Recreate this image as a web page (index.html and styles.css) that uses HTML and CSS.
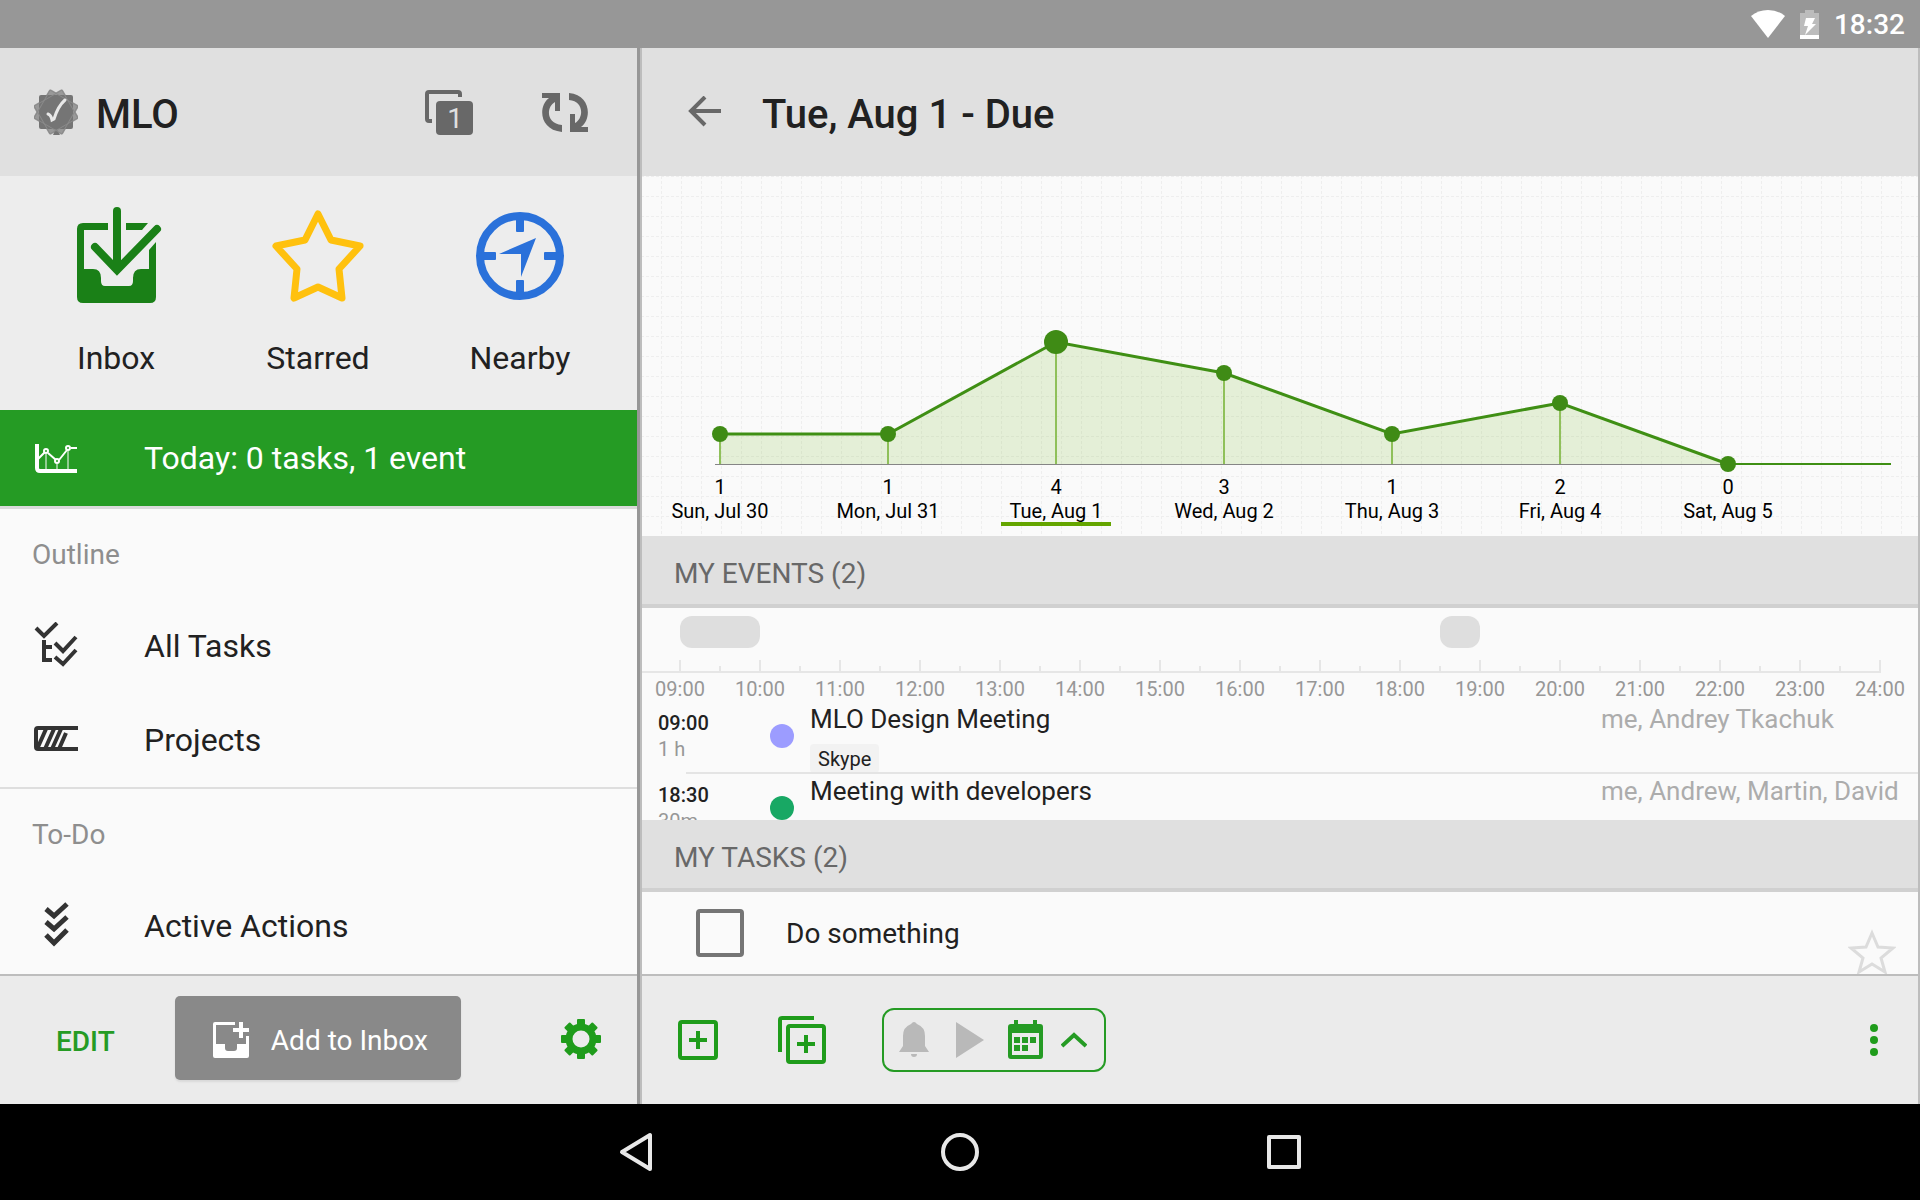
FILE: index.html
```
<!DOCTYPE html>
<html lang="en">

<head>
    <meta charset="UTF-8">
    <meta name="viewport" content="width=device-width, initial-scale=1.0">
    <title>MLO</title>
    <link rel="stylesheet" href="styles.css">
</head>

<body>
<div class="screen">

  <!-- android status bar -->
  <div class="status-bar">
    <svg class="wifi" width="34" height="28" viewBox="0 0 34 28"><path d="M17 28L0 6Q7 0 17 0T34 6z" fill="#fff"/></svg>
    <svg class="battery" width="19" height="29" viewBox="0 0 19 29">
      <path d="M5 0h9v3h5v26H0V3h5z" fill="#bcbcbc"/>
      <path d="M0 25h19v4H0z" fill="#fff"/>
      <path d="M6 8h9l-3 6h4L5 25l3-9H4z" fill="#fff"/>
    </svg>
    <span class="clock">18:32</span>
  </div>

  <div class="panes">

    <!-- left side -->
    <aside class="sidebar">
      <header class="side-header">
        <svg class="logo" width="44" height="56" viewBox="0 0 44 56">
          <g fill="#999">
            <rect x="5" y="10" width="34" height="34" rx="2" transform="rotate(30 22 27)"/>
            <rect x="5" y="10" width="34" height="34" rx="2" transform="rotate(60 22 27)"/>
          </g>
          <path d="M22 43l4 7h-7z" fill="#757575"/>
          <rect x="5" y="10" width="34" height="34" rx="2" fill="#757575"/>
          <g fill="none" stroke="#8a8a8a">
            <rect x="6" y="11" width="32" height="32" transform="rotate(30 22 27)"/>
            <rect x="6" y="11" width="32" height="32" transform="rotate(60 22 27)"/>
          </g>
          <path d="M14 29q3 1 4 6l2-1Q24 21 31 15" fill="none" stroke="#e8e8e8" stroke-width="3" stroke-linecap="round"/>
        </svg>
        <h1>MLO</h1>
        <button type="button" class="icon-button views" aria-label="Views">
          <svg width="48" height="46" viewBox="0 0 48 46">
            <path d="M7 31H4q-2 0-2-2V4q0-2 2-2h29q2 0 2 2v3" fill="none" stroke="#686868" stroke-width="4"/>
            <rect x="11" y="11" width="37" height="34" rx="4" fill="#686868"/>
            <text x="30" y="38" class="views-count">1</text>
          </svg>
        </button>
        <button type="button" class="icon-button" aria-label="Sync">
          <svg width="46" height="40" viewBox="0 0 46 40" fill="#686868">
            <path d="M0 0h18v18h-5V9C4 14 4 31 20 32v7C-3 37-4 13 7 5H0z"/>
            <path d="M46 39H28V21h5v9c9-5 9-22-6-23V0c22 2 23 26 12 34h7z"/>
          </svg>
        </button>
      </header>

      <nav class="shortcuts">
        <a href="#inbox">
          <svg width="92" height="104" viewBox="0 -1 92 104">
            <path fill="#1a8017" d="M13 22h25v7H14v39h9q8 0 8 9v3q0 5 4 5h24q4 0 4-5v-3q0-9 8-9h8V49l7-8v55q0 6-6 6H13q-6 0-6-6V28q0-6 6-6z"/>
            <path fill="#1a8017" d="M56 22h22l-6 7H56z"/>
            <path d="M47 10v54M25 46l22 23 40-41" fill="none" stroke="#1a8017" stroke-width="8" stroke-linecap="round"/>
          </svg>
          <span>Inbox</span>
        </a>
        <a href="#starred">
          <svg width="94" height="104" viewBox="0 1 94 104">
            <path d="M47 15l13 26 29 6-21 23 3 29-24-11-24 11 3-29L5 47l29-6z" fill="none" stroke="#ffc10e" stroke-width="7" stroke-linejoin="round"/>
          </svg>
          <span>Starred</span>
        </a>
        <a href="#nearby">
          <svg width="90" height="104" viewBox="0 1 90 104">
            <circle cx="45" cy="57" r="40" fill="none" stroke="#2a71da" stroke-width="8"/>
            <g fill="#2a71da">
              <rect x="41" y="18" width="8" height="15" rx="1"/>
              <rect x="41" y="81" width="8" height="15" rx="1"/>
              <rect x="6" y="53" width="15" height="8" rx="1"/>
              <rect x="69" y="53" width="15" height="8" rx="1"/>
              <path d="M61 39L46 78V55H24z"/>
            </g>
          </svg>
          <span>Nearby</span>
        </a>
      </nav>

      <a href="#today" class="row today">
        <svg width="44" height="48" viewBox="0 0 44 48" fill="none" stroke="#fff">
          <path d="M3 10v24q0 3 3 3h37" stroke-width="4"/>
          <path d="M3 26l8-8M14 19l8 7M25 26l8-10M37 14h6" stroke-width="2"/>
          <path d="M12 20v16M23 30v6M34 17v19" stroke-width="1"/>
          <circle cx="12" cy="17" r="2" stroke-width="2"/>
          <circle cx="23" cy="27" r="2" stroke-width="2"/>
          <circle cx="34" cy="14" r="2" stroke-width="2"/>
        </svg>
        <span>Today: 0 tasks, 1 event</span>
      </a>

      <div class="side-list">
        <section>
          <h2>Outline</h2>
          <a href="#all" class="row">
            <svg width="44" height="48" viewBox="0 2 44 48" fill="none" stroke="#333" stroke-width="4">
              <path d="M2 8l8 8L23 3M21 23l8 8 13-14M21 37l8 7 13-14"/>
              <path d="M18 27h-9M10 20v20h8"/>
            </svg>
            <span>All Tasks</span>
          </a>
          <a href="#projects" class="row">
            <svg width="44" height="48" viewBox="0 0 44 48">
              <path d="M44 12H4q-2 0-2 2v17q0 2 2 2h40" fill="none" stroke="#333" stroke-width="4"/>
              <path d="M4 31l8-18M11 33l9-20M18 33l9-20M25 33l7-16" stroke="#333" stroke-width="4"/>
            </svg>
            <span>Projects</span>
          </a>
        </section>
        <section>
          <h2>To-Do</h2>
          <a href="#active" class="row">
            <svg width="44" height="48" viewBox="0 2 44 48" fill="none" stroke="#333" stroke-width="5">
              <path d="M12 9l8 7L33 4M12 22l8 7 13-12M12 35l8 8 13-13"/>
            </svg>
            <span>Active Actions</span>
          </a>
        </section>
      </div>

      <footer class="side-footer">
        <button type="button" class="edit">EDIT</button>
        <button type="button" class="add-inbox">
          <svg width="36" height="36" viewBox="0 0 36 36" fill="#fff">
            <path d="M2 0h20v3H3v19h9v4q0 3 3 3h6q3 0 3-3v-4h9v-8h3v20q0 2-2 2H2q-2 0-2-2V2q0-2 2-2z"/>
            <path d="M26 0h4v6h6v4h-6v6h-4v-6h-6V6h6z"/>
          </svg>
          Add to Inbox
        </button>
        <button type="button" class="icon-button" aria-label="Settings">
          <svg width="40" height="42" viewBox="-20 -20 40 42" fill="#1f9c1b">
            <circle r="12" fill="none" stroke="#1f9c1b" stroke-width="7"/>
            <rect x="-4" y="-20" width="8" height="8" rx="1"/>
            <rect x="-4" y="12" width="8" height="8" rx="1"/>
            <rect x="-20" y="-4" width="8" height="8" rx="1"/>
            <rect x="12" y="-4" width="8" height="8" rx="1"/>
            <g transform="rotate(45)">
              <rect x="-4" y="-20" width="8" height="8" rx="1"/>
              <rect x="-4" y="12" width="8" height="8" rx="1"/>
              <rect x="-20" y="-4" width="8" height="8" rx="1"/>
              <rect x="12" y="-4" width="8" height="8" rx="1"/>
            </g>
          </svg>
        </button>
      </footer>
    </aside>

    <!-- right side -->
    <main class="content">
      <header class="content-header">
        <button type="button" class="icon-button" aria-label="Back">
          <svg width="34" height="34" viewBox="0 0 34 34" fill="none" stroke="#686868" stroke-width="4"><path d="M34 15H4M18 1L4 15l14 14"/></svg>
        </button>
        <h1>Tue, Aug 1 - Due</h1>
      </header>

      <!-- tasks per day -->
      <svg class="chart" viewBox="0 0 1276 360">
        <defs>
          <pattern id="grid" x="19" width="20" height="20" patternUnits="userSpaceOnUse">
            <path d="M0 .5h20M.5 0v20" fill="none" stroke="#eee" stroke-dasharray="3 2"/>
          </pattern>
        </defs>
        <rect width="1276" height="360" fill="url(#grid)"/>
        <path d="M78 258h168l168-92 168 31 168 61 168-31 168 61H78z" fill="#8bc34a" fill-opacity=".2"/>
        <path d="M78 258v30M246 258v30M414 166v122M582 197v91M750 258v30M918 227v61" stroke="#8fc05a" stroke-width="2"/>
        <path d="M73 288.5h1176" stroke="#858585"/>
        <path d="M78 258h168l168-92 168 31 168 61 168-31 168 61" fill="none" stroke="#3f8f14" stroke-width="3"/>
        <path d="M1086 288h163" stroke="#3f8f14" stroke-width="2"/>
        <g fill="#3f8b15">
          <circle cx="78" cy="258" r="8"/>
          <circle cx="246" cy="258" r="8"/>
          <circle cx="414" cy="166" r="12"/>
          <circle cx="582" cy="197" r="8"/>
          <circle cx="750" cy="258" r="8"/>
          <circle cx="918" cy="227" r="8"/>
          <circle cx="1086" cy="288" r="8"/>
        </g>
        <g class="chart-labels">
          <text x="78" y="318">1</text><text x="78" y="342">Sun, Jul 30</text>
          <text x="246" y="318">1</text><text x="246" y="342">Mon, Jul 31</text>
          <text x="414" y="318">4</text><text x="414" y="342">Tue, Aug 1</text>
          <text x="582" y="318">3</text><text x="582" y="342">Wed, Aug 2</text>
          <text x="750" y="318">1</text><text x="750" y="342">Thu, Aug 3</text>
          <text x="918" y="318">2</text><text x="918" y="342">Fri, Aug 4</text>
          <text x="1086" y="318">0</text><text x="1086" y="342">Sat, Aug 5</text>
        </g>
        <rect x="359" y="346" width="110" height="4" fill="#64a500"/>
      </svg>

      <h2 class="section-title">MY EVENTS (2)</h2>

      <svg class="timeline" viewBox="0 0 1276 94">
        <defs>
          <pattern id="hours" x="37" y="52" width="80" height="12" patternUnits="userSpaceOnUse">
            <path d="M0 0h2v12H0zM40 6h2v6h-2z" fill="#e6e6e6"/>
          </pattern>
        </defs>
        <rect x="38" y="8" width="80" height="32" rx="12" fill="#dedede"/>
        <rect x="798" y="8" width="40" height="32" rx="12" fill="#dedede"/>
        <rect x="37" y="52" width="1202" height="12" fill="url(#hours)"/>
        <path d="M0 64h1239" stroke="#e6e6e6" stroke-width="2"/>
        <g class="hour-labels">
          <text x="38" y="88">09:00</text>
          <text x="118" y="88">10:00</text>
          <text x="198" y="88">11:00</text>
          <text x="278" y="88">12:00</text>
          <text x="358" y="88">13:00</text>
          <text x="438" y="88">14:00</text>
          <text x="518" y="88">15:00</text>
          <text x="598" y="88">16:00</text>
          <text x="678" y="88">17:00</text>
          <text x="758" y="88">18:00</text>
          <text x="838" y="88">19:00</text>
          <text x="918" y="88">20:00</text>
          <text x="998" y="88">21:00</text>
          <text x="1078" y="88">22:00</text>
          <text x="1158" y="88">23:00</text>
          <text x="1238" y="88">24:00</text>
        </g>
      </svg>

      <ul class="events">
        <li>
          <div class="when"><b>09:00</b><span>1 h</span></div>
          <i class="dot violet"></i>
          <div class="what"><span>MLO Design Meeting</span><small>Skype</small></div>
          <span class="who">me, Andrey Tkachuk</span>
        </li>
        <li>
          <div class="when"><b>18:30</b><span>30m</span></div>
          <i class="dot green"></i>
          <div class="what"><span>Meeting with developers</span></div>
          <span class="who">me, Andrew, Martin, David</span>
        </li>
      </ul>

      <h2 class="section-title">MY TASKS (2)</h2>

      <div class="tasks">
        <div class="task">
          <input type="checkbox" id="task1">
          <label for="task1">Do something</label>
          <button type="button" class="icon-button star" aria-label="Star">
            <svg width="48" height="46" viewBox="0 0 48 46"><path d="M24 4l6 14 15 1-12 10 4 14-13-8-13 8 4-14L3 19l15-1z" fill="none" stroke="#dcdcdc" stroke-width="3"/></svg>
          </button>
        </div>
      </div>

      <footer class="toolbar">
        <button type="button" class="icon-button" aria-label="Add task">
          <svg width="40" height="40" viewBox="0 0 40 40" fill="none" stroke="#1f9c1b" stroke-width="4">
            <rect x="2" y="2" width="36" height="36" rx="2"/>
            <path d="M20 11v18M11 20h18"/>
          </svg>
        </button>
        <button type="button" class="icon-button" aria-label="Add subtask">
          <svg width="48" height="48" viewBox="0 0 48 48" fill="none" stroke="#1f9c1b" stroke-width="4">
            <path d="M2 36V4q0-2 2-2h32"/>
            <rect x="10" y="10" width="36" height="36" rx="2"/>
            <path d="M28 19v18M19 28h18"/>
          </svg>
        </button>
        <button type="button" class="view-options" aria-label="View options">
          <svg width="39" height="36" viewBox="0 0 39 36" fill="#b9b9b9">
            <path d="M0 30l4-6V14q0-9 8-12 3-4 6 0 8 3 8 12v10l4 6zM12 32h6q0 3-3 3t-3-3z"/>
          </svg>
          <svg width="34" height="36" viewBox="0 0 34 36" fill="#b9b9b9"><path d="M0 0l28 18L0 36z"/></svg>
          <svg width="35" height="40" viewBox="0 0 35 40" fill="#259b24">
            <path fill-rule="evenodd" d="M6 0h4v4h15V0h4v4h3q3 0 3 3v29q0 3-3 3H3q-3 0-3-3V7q0-3 3-3h3zM4 13v22h27V13z"/>
            <path d="M6 17h6v6H6zM14 17h6v6h-6zM22 17h6v6h-6zM6 25h6v6H6zM14 25h6v6h-6z"/>
          </svg>
          <svg width="26" height="16" viewBox="0 0 26 16" fill="none" stroke="#259b24" stroke-width="4"><path d="M1 14L13 3l12 11"/></svg>
        </button>
        <button type="button" class="icon-button more" aria-label="More">
          <svg width="8" height="34" viewBox="0 0 8 34" fill="#1f9c1b"><circle cx="4" cy="5" r="4"/><circle cx="4" cy="17" r="4"/><circle cx="4" cy="29" r="4"/></svg>
        </button>
      </footer>
    </main>
  </div>

  <!-- android navigation -->
  <nav class="nav-bar">
    <button type="button" class="icon-button" aria-label="Back"><svg width="40" height="40" viewBox="0 0 40 40"><path d="M6 20L34 3v34z"/></svg></button>
    <button type="button" class="icon-button" aria-label="Home"><svg width="40" height="40" viewBox="0 0 40 40"><circle cx="20" cy="20" r="17"/></svg></button>
    <button type="button" class="icon-button" aria-label="Recent apps"><svg width="40" height="40" viewBox="0 0 40 40"><rect x="5" y="5" width="30" height="30"/></svg></button>
  </nav>
</div>
</body>

</html>
```
FILE: styles.css
```
* {
  box-sizing: border-box;
}

body {
  margin: 0;
  font-family: Roboto, "Liberation Sans", sans-serif;
  color: #212121;
  background: #000;
}

h1, h2, ul {
  margin: 0;
  padding: 0;
}

h1 {
  font-size: 40px;
  font-weight: 500;
}

a {
  color: inherit;
  text-decoration: none;
}

svg {
  display: block;
  flex-shrink: 0;
}

button {
  font-family: inherit;
  border: none;
  background: none;
  padding: 0;
  cursor: pointer;
}

.screen {
  height: 100vh;
  display: flex;
  flex-direction: column;
}

/* top bar with the clock */
.status-bar {
  height: 48px;
  background: #979797;
  color: #fff;
  display: flex;
  align-items: center;
  justify-content: flex-end;
  gap: 15px;
  padding-right: 15px;
  font-size: 28px;
  font-weight: 500;
}

.panes {
  flex: 1;
  min-height: 0;
  display: grid;
  grid-template-columns: 1fr 2fr;
}

/* left side */
.sidebar {
  display: flex;
  flex-direction: column;
  min-height: 0;
  background: #fafafa;
  border-right: 3px solid #979797;
}

.side-header,
.content-header {
  height: 128px;
  flex-shrink: 0;
  background: #e0e0e0;
  display: flex;
  align-items: center;
  padding-top: 2px;
}

.side-header h1,
.content-header h1 {
  padding-top: 2px;
}

.side-header {
  padding-left: 34px;
  padding-right: 49px;
}

.logo {
  margin-right: 18px;
}

.views {
  margin-left: auto;
  margin-right: 69px;
}

.views-count {
  font-size: 28px;
  fill: #e0e0e0;
  text-anchor: middle;
}

.shortcuts {
  height: 234px;
  flex-shrink: 0;
  background: #ededed;
  display: flex;
  padding: 24px 16px 0 15px;
}

.shortcuts a {
  flex: 1;
  display: flex;
  flex-direction: column;
  align-items: center;
  gap: 34px;
  font-size: 32px;
  line-height: 40px;
}

.row {
  height: 94px;
  display: flex;
  align-items: center;
  gap: 66px;
  padding-left: 34px;
  font-size: 32px;
}

.today {
  height: 96px;
  flex-shrink: 0;
  background: #259b24;
  color: #fff;
}

.side-list {
  flex: 1;
  min-height: 0;
  overflow: hidden;
  border-top: 3px solid #dadada;
}

.side-list section + section {
  border-top: 2px solid #dedede;
}

.side-list h2 {
  padding-top: 1px;
  padding-left: 32px;
  font-size: 28px;
  font-weight: 400;
  line-height: 89px;
  color: #8e8e8e;
}

.side-footer,
.toolbar {
  height: 130px;
  flex-shrink: 0;
  display: flex;
  align-items: center;
  background: #ebebeb;
  border-top: 2px solid #bdbdbd;
}

.side-footer {
  justify-content: space-between;
  padding: 0 36px 0 56px;
}

.edit {
  padding-top: 2px;
  font-size: 28px;
  font-weight: 500;
  color: #259b24;
}

.add-inbox {
  width: 286px;
  height: 84px;
  display: flex;
  align-items: center;
  gap: 22px;
  padding-top: 4px;
  padding-left: 38px;
  margin-left: 16px;
  margin-right: 56px;
  margin-bottom: 4px;
  font-size: 28px;
  color: #fff;
  background: #898989;
  border-radius: 5px;
  box-shadow: 0 2px 2px #dadada;
}

/* right side */
.content {
  display: flex;
  flex-direction: column;
  min-width: 0;
  min-height: 0;
  background: #fafafa;
  border-left: 2px solid #bdbdbd;
  border-right: 2px solid #bdbdbd;
}

.content-header {
  gap: 41px;
  padding-left: 45px;
}

.chart,
.timeline {
  width: 100%;
}

.chart-labels {
  font-size: 20px;
  fill: #000;
  text-anchor: middle;
}

.hour-labels {
  font-size: 20px;
  fill: #979797;
  text-anchor: middle;
}

.section-title {
  height: 72px;
  flex-shrink: 0;
  padding: 4px 32px 0;
  font-size: 28px;
  font-weight: 400;
  line-height: 67px;
  color: #686868;
  background: #e0e0e0;
  border-bottom: 4px solid #d0d0d0;
}

.events {
  height: 118px;
  flex-shrink: 0;
  overflow: hidden;
  list-style: none;
}

.events li {
  height: 72px;
  display: flex;
  position: relative;
  padding: 0 16px;
}

/* divider starts under the time */
.events li + li::before {
  content: "";
  position: absolute;
  left: 44px;
  right: 0;
  top: -2px;
  height: 2px;
  background: #e4e4e4;
}

.when {
  width: 112px;
  padding-top: 8px;
  display: flex;
  flex-direction: column;
  font-size: 20px;
  line-height: 26px;
}

.when b {
  font-weight: 500;
}

.when span {
  color: #979797;
}

.dot {
  width: 24px;
  height: 24px;
  margin: 22px 16px 0 0;
  border-radius: 50%;
}

.violet {
  background: #9c9cff;
}

.green {
  background: #18a864;
}

.what {
  flex: 1;
  display: flex;
  flex-direction: column;
  align-items: flex-start;
  gap: 8px;
  font-size: 26px;
  line-height: 34px;
}

.what small {
  padding: 1px 8px 0;
  font-size: 20px;
  line-height: 28px;
  background: #f2f2f2;
  border-radius: 4px;
}

.who {
  width: 301px;
  font-size: 26px;
  line-height: 34px;
  white-space: nowrap;
  color: #acacac;
}

.tasks {
  flex: 1;
  min-height: 0;
  overflow: hidden;
}

.task {
  height: 96px;
  display: flex;
  align-items: flex-start;
  padding: 17px 22px 0 54px;
}

.task input {
  appearance: none;
  width: 48px;
  height: 48px;
  margin: 0 42px 0 0;
  border: 4px solid #757575;
  border-radius: 4px;
}

.task label {
  flex: 1;
  font-size: 28px;
  line-height: 50px;
}

.star {
  margin-top: 20px;
}

/* bottom buttons */
.toolbar {
  padding: 0 40px 0 36px;
}

.toolbar .icon-button {
  margin-right: 60px;
}

.toolbar .view-options {
  width: 224px;
  height: 64px;
  margin-left: -4px;
  display: flex;
  align-items: center;
  justify-content: space-between;
  padding: 0 17px 0 15px;
  border: 2px solid #259b24;
  border-radius: 12px;
}

.toolbar .more {
  margin-left: auto;
  margin-right: 0;
}

.nav-bar {
  height: 96px;
  display: flex;
  align-items: center;
  justify-content: center;
  gap: 284px;
  background: #000;
}

.nav-bar svg {
  fill: none;
  stroke: #e8e8e8;
  stroke-width: 4;
  stroke-linejoin: round;
}
```
